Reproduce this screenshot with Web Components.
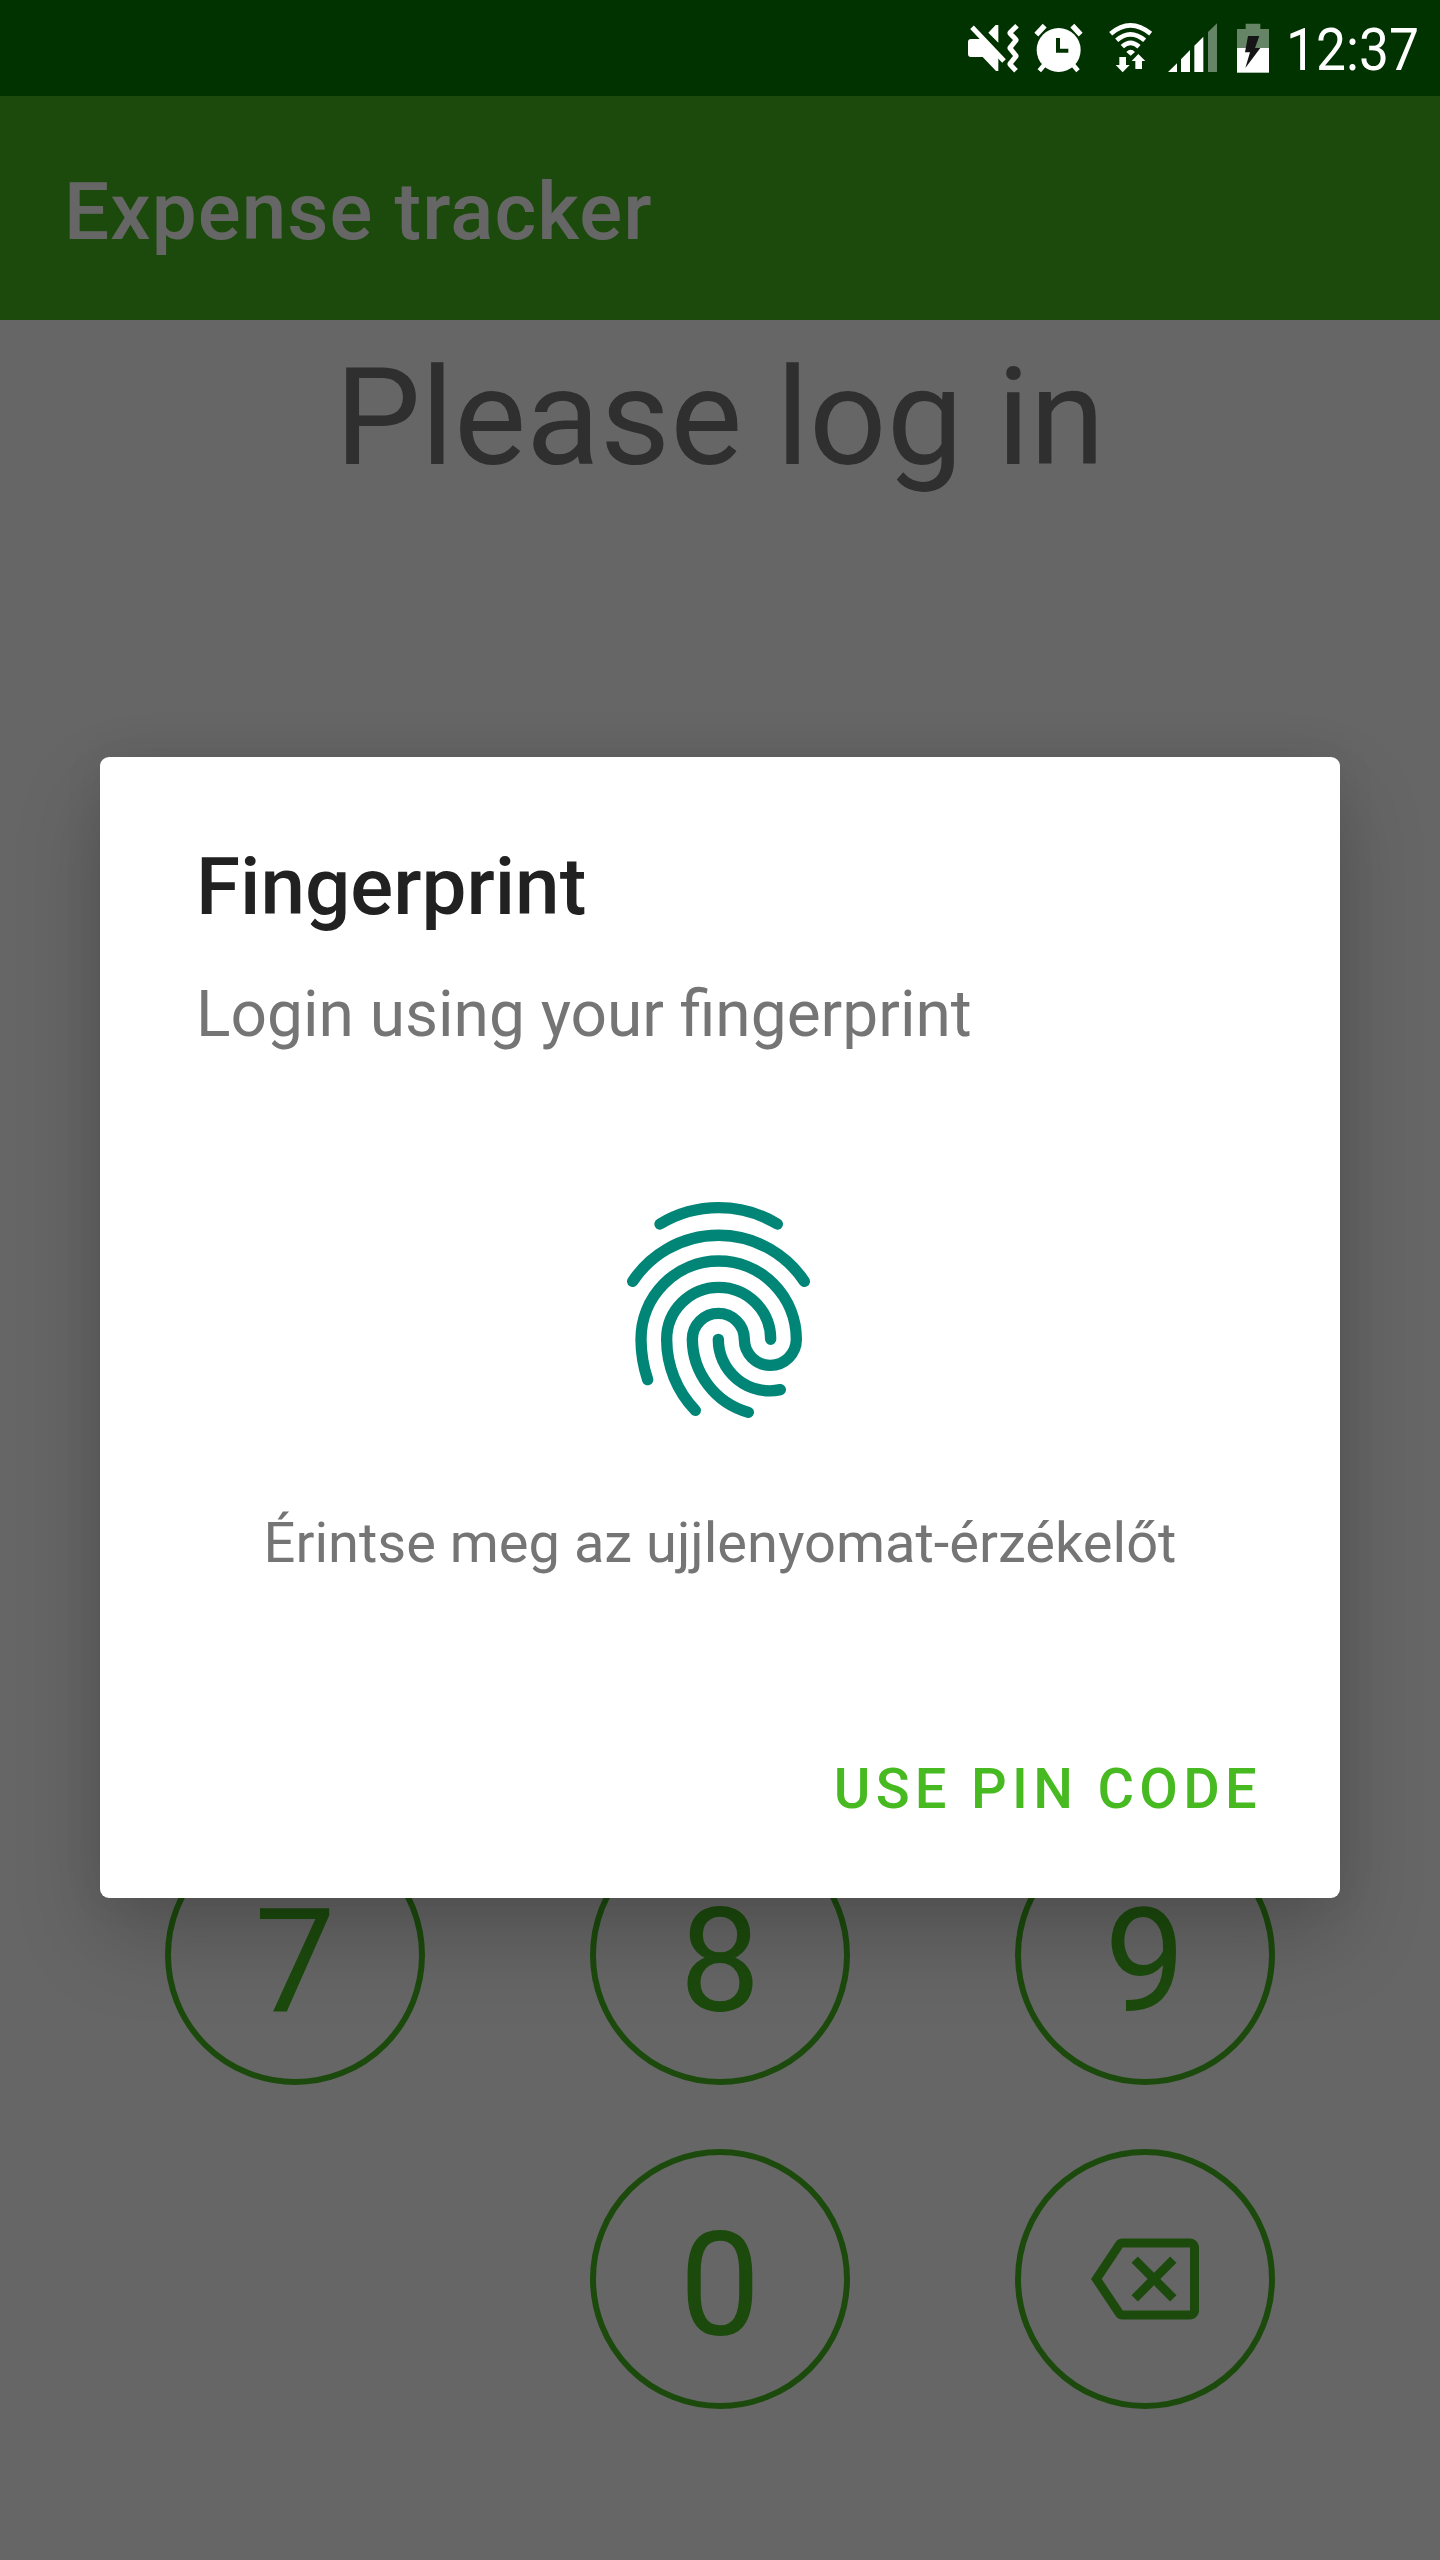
<!DOCTYPE html>
<html lang="hu">
<head>
<meta charset="utf-8">
<title>Expense tracker</title>
<style>
html,body{margin:0;padding:0}
body{width:1440px;height:2560px;overflow:hidden;background:#666;font-family:Roboto,"Liberation Sans",sans-serif}
</style>
</head>
<body>
<tracker-screen>
  <status-bar slot="status" time="12:37"></status-bar>
  <app-bar>Expense tracker</app-bar>
  <login-pane heading="Please log in">
    <pin-key>7</pin-key><pin-key>8</pin-key><pin-key>9</pin-key>
    <pin-key style="grid-column:2">0</pin-key><pin-key><backspace-icon></backspace-icon></pin-key>
  </login-pane>
  <fingerprint-dialog slot="dialog">
    <span slot="title">Fingerprint</span>
    <span slot="subtitle">Login using your fingerprint</span>
    <fingerprint-icon slot="icon"></fingerprint-icon>
    <span slot="hint">Érintse meg az ujjlenyomat-érzékelőt</span>
    <span slot="action">USE PIN CODE</span>
  </fingerprint-dialog>
</tracker-screen>
<script>
const define = (name, html) => customElements.define(name, class extends HTMLElement {
  constructor() {
    super();
    this.attachShadow({mode: 'open'});
  }
  connectedCallback() {
    this.shadowRoot.innerHTML = html(this);
  }
});

define('tracker-screen', () => `
<style>
:host{display:grid;grid-template:96px 1fr / 1440px;height:2560px;position:relative;overflow:hidden}
main{display:flex;flex-direction:column;background:#fff}
.scrim{position:absolute;inset:96px 0 0;background:rgba(0,0,0,.6)}
.layer{position:absolute;inset:757px 100px 662px;display:grid}
</style>
<slot name="status"></slot>
<main><slot></slot></main>
<div class="scrim"></div>
<div class="layer"><slot name="dialog"></slot></div>`);

define('status-bar', el => `
<style>
:host{display:flex;justify-content:flex-end;align-items:center;gap:10px;box-sizing:border-box;height:96px;background:#030;color:#fff;padding-right:21px}
svg{display:block;width:326px;height:96px;flex:none}
.time{width:133px;font-size:60px;line-height:70px;white-space:nowrap;display:block;margin-top:3px}
.time span{display:inline-block;transform:scaleX(.89);transform-origin:0 50%}
</style>
<svg viewBox="0 0 978 288" fill="#fff">
  <path d="M54 126q0-9 9-9H99L145 168V213H138L98 171H63q-9 0-9-9zM115 98L137 75H145V128z"/>
  <path d="M66 82L162 183" fill="none" stroke="#fff" stroke-width="15"/>
  <path d="M201 77L181 97Q179 99 181 101L197 118Q199 120 197 122L181 142Q179 144 181 146L197 166Q199 168 197 170L181 190Q179 192 181 194L198 212" fill="none" stroke="#fff" stroke-width="15"/>
  <circle cx="326" cy="150" r="66"/>
  <path d="M259 104L284 77M367 77L392 104" stroke="#fff" stroke-width="16"/>
  <path d="M285 192L268 212M367 192L384 212" stroke="#fff" stroke-width="14"/>
  <path d="M324 114V152H355" fill="none" stroke="#030" stroke-width="12"/>
  <g fill="none" stroke="#fff" stroke-width="14">
    <path d="M482 101Q541 51 602 101"/><path d="M500 121Q541 85 584 121"/><path d="M517 140Q541 117 567 140"/>
  </g>
  <path d="M529 156Q542 143 555 156L542 167zM508 171H528V195H539L518 217 497 195H508zM556 207H576V183H586L565 162 545 183H556z"/>
  <path d="M654 216L681 190V216zM693 178L720 150V216H693zM733 137L760 110V216H733z"/>
  <path d="M774 96L801 70V216H774z" opacity=".4"/>
  <path d="M887 71H931V87H957V144H861V87H887z" opacity=".4"/>
  <path d="M861 144H957V218H861z"/>
  <path d="M894 108H928L915 144H931L886 204 900 157H885z" fill="#151515"/>
</svg>
<div class="time"><span>${el.getAttribute('time')}</span></div>`);

define('app-bar', () => `
<style>:host{display:flex;align-items:center;box-sizing:border-box;height:224px;padding:8px 64px 0;background:#47ba21;color:#fff;font-size:80px;font-weight:500;line-height:94px;letter-spacing:1.1px}</style>
<slot></slot>`);

define('login-pane', el => `
<style>
:host{display:flex;flex-direction:column;justify-content:space-between;flex:1;box-sizing:border-box;padding:18px 0 151px}
h1{margin:0;font-size:136px;font-weight:400;line-height:160px;text-align:center;color:#757575}
.keys{display:grid;grid-template-columns:repeat(3,260px);column-gap:165px;row-gap:64px;justify-content:center}
</style>
<h1>${el.getAttribute('heading')}</h1>
<div class="keys"><slot></slot></div>`);

define('pin-key', () => `
<style>:host{display:flex;align-items:center;justify-content:center;box-sizing:border-box;width:260px;height:260px;border:6px solid #47ba21;border-radius:50%;color:#47ba21;font-size:144px;line-height:168px}
div{display:block;padding-top:14px}
::slotted(backspace-icon){margin-top:-14px}</style>
<div><slot></slot></div>`);

define('backspace-icon', () => `
<style>:host{display:block}svg{display:block;width:108px;height:108px}</style>
<svg viewBox="0 0 24 24" fill="currentColor"><path d="M22 3H7c-.69 0-1.23.35-1.59.88L0 12l5.41 8.11c.36.53.9.89 1.59.89h15c1.1 0 2-.9 2-2V5c0-1.1-.9-2-2-2zm0 16H7.07L2.4 12l4.66-7H22v14zm-11.59-2L14 13.41 17.59 17 19 15.59 15.41 12 19 8.41 17.59 7 14 10.59 10.41 7 9 8.41 12.59 12 9 15.59z"/></svg>`);

define('fingerprint-icon', () => `
<style>:host{display:block}svg{display:block;width:240px;height:260px}</style>
<svg viewBox="0 0 720 780" fill="none" stroke="#008577" stroke-width="34" stroke-linecap="round">
  <path d="M180 132A341 341 0 0 1 532 132"/>
  <path d="M98 304A309 309 0 0 1 613 304"/>
  <path d="M143 599A384 384 0 0 1 123 478A233 235 0 0 1 589 478A78 78 0 0 1 433 478A78 78 0 0 0 277 478A230 230 0 0 0 445 697"/>
  <path d="M512 478A156 156 0 0 0 200 478A307 307 0 0 0 286 691"/>
  <path d="M355 478A154 154 0 0 0 541 629"/>
</svg>`);

define('fingerprint-dialog', () => `
<style>
:host{display:flex;flex-direction:column;box-sizing:border-box;background:#fff;border-radius:9px;box-shadow:0 40px 88px rgba(0,0,0,.2),0 0 40px rgba(0,0,0,.07);padding:83px 78px 76px 96px}
h2{margin:0;font-size:80px;font-weight:500;line-height:94px;color:#212121}
p{margin:0;color:#757575}
.sub{font-size:64px;line-height:76px;margin-top:43px}
.icon{display:flex;width:240px;margin:127px 0 0 404px}
.hint{font-size:56px;line-height:66px;text-align:center;margin:70px -78px 0 -96px}
button{all:unset;align-self:flex-end;margin-top:auto;font-size:56px;line-height:66px;font-weight:500;letter-spacing:5.3px;color:#47ba21}
</style>
<h2><slot name="title"></slot></h2>
<p class="sub"><slot name="subtitle"></slot></p>
<div class="icon"><slot name="icon"></slot></div>
<p class="hint"><slot name="hint"></slot></p>
<button><slot name="action"></slot></button>`);
</script>
</body>
</html>
